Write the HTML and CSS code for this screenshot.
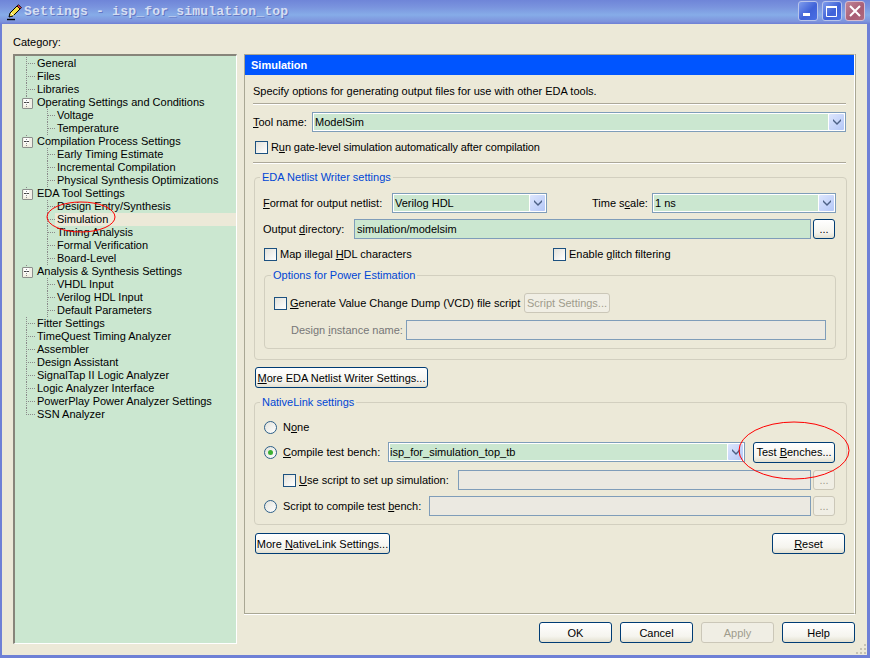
FILE: index.html
```html
<!DOCTYPE html>
<html>
<head>
<meta charset="utf-8">
<title>Settings</title>
<link rel="stylesheet" href="styles.css">
</head>
<body>
<div class="window">
  <header class="titlebar">
    <svg class="app-icon" width="16" height="17" viewBox="0 0 16 17">
      <path d="M1 15.5h8" stroke="#000" stroke-width="1.4"/>
      <path d="M3 13l1-4 7-7 3 3-7 7z" fill="#f4e04a" stroke="#000" stroke-width="1"/>
      <path d="M11 2l1.5-1.3 3 3L14 5z" fill="#e0384a" stroke="#000" stroke-width=".8"/>
      <path d="M5 9l2.6 2.6" stroke="#fff" stroke-width="1"/>
    </svg>
    <span class="title-text">Settings - isp_for_simulation_top</span>
    <div class="win-buttons">
      <span class="win-btn"><svg width="20" height="20" viewBox="0 0 20 20"><rect x="5" y="12" width="7" height="3" fill="#fff"/></svg></span>
      <span class="win-btn"><svg width="20" height="20" viewBox="0 0 20 20"><path d="M4.500 5.500h10v10h-10z" fill="none" stroke="#fff"/><path d="M4 5h11v2H4z" fill="#fff"/></svg></span>
      <span class="win-btn close"><svg width="20" height="20" viewBox="0 0 20 20"><path d="M5 5l10 10M15 5L5 15" stroke="#fff" stroke-width="2"/></svg></span>
    </div>
  </header>

  <div class="client">
    <div class="category-label">Category:</div>
    <div class="columns">
      <nav class="tree">
        <div class="node l1">General</div>
        <div class="node l1">Files</div>
        <div class="node l1">Libraries</div>
        <div class="node l1 open">Operating Settings and Conditions</div>
        <div class="node l2">Voltage</div>
        <div class="node l2">Temperature</div>
        <div class="node l1 open">Compilation Process Settings</div>
        <div class="node l2">Early Timing Estimate</div>
        <div class="node l2">Incremental Compilation</div>
        <div class="node l2">Physical Synthesis Optimizations</div>
        <div class="node l1 open">EDA Tool Settings</div>
        <div class="node l2">Design Entry/Synthesis</div>
        <div class="node l2 selected">Simulation</div>
        <div class="node l2">Timing Analysis</div>
        <div class="node l2">Formal Verification</div>
        <div class="node l2">Board-Level</div>
        <div class="node l1 open">Analysis &amp; Synthesis Settings</div>
        <div class="node l2">VHDL Input</div>
        <div class="node l2">Verilog HDL Input</div>
        <div class="node l2">Default Parameters</div>
        <div class="node l1">Fitter Settings</div>
        <div class="node l1">TimeQuest Timing Analyzer</div>
        <div class="node l1">Assembler</div>
        <div class="node l1">Design Assistant</div>
        <div class="node l1">SignalTap II Logic Analyzer</div>
        <div class="node l1">Logic Analyzer Interface</div>
        <div class="node l1">PowerPlay Power Analyzer Settings</div>
        <div class="node l1 last">SSN Analyzer</div>
      </nav>

      <div class="main-col">
        <section class="panel">
          <h2 class="panel-head">Simulation</h2>
          <div class="panel-body">
            <div class="text-row desc">Specify options for generating output files for use with other EDA tools.</div>
            <div class="sep sep-a"></div>
            <div class="row tool-row">
              <label class="lbl w-tool"><u>T</u>ool name:</label>
              <div class="combo grow"><span class="combo-text">ModelSim</span><span class="arrow"><svg width="10" height="8" viewBox="0 0 10 8"><path d="M1 1l4 4 4-4v2L5 7 1 3z" fill="#4d6185"/></svg></span></div>
            </div>
            <div class="row check-row run-row"><span class="check"></span><span class="tight">R<u>u</u>n gate-level simulation automatically after compilation</span></div>
            <div class="sep sep-b"></div>

            <fieldset class="group eda">
              <legend>EDA Netlist Writer settings</legend>
              <div class="row format-row">
                <label class="lbl w-format"><u>F</u>ormat for output netlist:</label>
                <div class="combo w-fmt"><span class="combo-text">Verilog HDL</span><span class="arrow"><svg width="10" height="8" viewBox="0 0 10 8"><path d="M1 1l4 4 4-4v2L5 7 1 3z" fill="#4d6185"/></svg></span></div>
                <label class="lbl w-time">Time s<u>c</u>ale:</label>
                <div class="combo w-scale"><span class="combo-text">1 ns</span><span class="arrow"><svg width="10" height="8" viewBox="0 0 10 8"><path d="M1 1l4 4 4-4v2L5 7 1 3z" fill="#4d6185"/></svg></span></div>
              </div>
              <div class="row dir-row">
                <label class="lbl w-dir">Output <u>d</u>irectory:</label>
                <div class="field w-dirfield">simulation/modelsim</div>
                <button class="btn dots">...</button>
              </div>
              <div class="row check-row map-row">
                <span class="check"></span><span class="w-map">Map illegal <u>H</u>DL characters</span>
                <span class="check"></span><span>Enable <u>g</u>litch filtering</span>
              </div>
              <fieldset class="group power">
                <legend>Options for Power Estimation</legend>
                <div class="row gen-row">
                  <span class="check"></span><span class="w-gen"><u>G</u>enerate Value Change Dump (VCD) file script</span>
                  <button class="btn off script-btn">Script Settings...</button>
                </div>
                <div class="row inst-row">
                  <label class="lbl off-text w-inst">Design <u>i</u>nstance name:</label>
                  <div class="field off-field w-instfield"></div>
                </div>
              </fieldset>
            </fieldset>

            <button class="btn more-eda"><u>M</u>ore EDA Netlist Writer Settings...</button>

            <fieldset class="group native">
              <legend>NativeLink settings</legend>
              <div class="row none-row"><span class="radio"></span><span>N<u>o</u>ne</span></div>
              <div class="row compile-row">
                <span class="radio on"></span><label class="lbl w-compile"><u>C</u>ompile test bench:</label>
                <div class="combo w-bench"><span class="combo-text">isp_for_simulation_top_tb</span><span class="arrow"><svg width="10" height="8" viewBox="0 0 10 8"><path d="M1 1l4 4 4-4v2L5 7 1 3z" fill="#4d6185"/></svg></span></div>
                <button class="btn bench-btn">Test <u>B</u>enches...</button>
              </div>
              <div class="row use-row">
                <span class="check"></span><label class="lbl w-use"><u>U</u>se script to set up simulation:</label>
                <div class="field off-field w-usefield"></div>
                <button class="btn off dots">...</button>
              </div>
              <div class="row script-row">
                <span class="radio"></span><label class="lbl w-script">Script to compile test <u>b</u>ench:</label>
                <div class="field off-field w-scriptfield"></div>
                <button class="btn off dots">...</button>
              </div>
            </fieldset>

            <div class="row more-row">
              <button class="btn more-native">More <u>N</u>ativeLink Settings...</button>
              <button class="btn reset"><u>R</u>eset</button>
            </div>
          </div>
        </section>
        <footer class="footer">
          <button class="btn foot">OK</button>
          <button class="btn foot">Cancel</button>
          <button class="btn foot off">Apply</button>
          <button class="btn foot">Help</button>
        </footer>
      </div>
    </div>
  </div>
  <svg class="grip" width="12" height="12" viewBox="0 0 12 12">
    <path d="M9 1h2v2H9zM5 5h2v2H5zM9 5h2v2H9zM1 9h2v2H1zM5 9h2v2H5zM9 9h2v2H9z" fill="#c5c2b2"/>
  </svg>
  <svg class="marks" width="870" height="658" viewBox="0 0 870 658">
    <ellipse cx="81" cy="217" rx="34" ry="15" fill="none" stroke="#f00"/>
    <ellipse cx="794" cy="450.500" rx="55" ry="28.500" fill="none" stroke="#f00"/>
  </svg>
</div>
</body>
</html>
```
FILE: styles.css
```css
* { box-sizing: border-box; }
html, body { margin: 0; padding: 0; }
body { width: 870px; height: 658px; overflow: hidden; font: 11px/14px "Liberation Sans", sans-serif; color: #000; }
u { text-decoration: underline; }

.window { position: relative; width: 870px; height: 658px; background: #ece9d8; display: flex; flex-direction: column; border: solid #6e80d6; border-width: 0 3px 3px 2px; }

.titlebar { flex: none; margin: 0 -3px 0 -2px; height: 24px; display: flex; align-items: center; padding: 0 5px 0 6px; background: linear-gradient(180deg, #6f85d8 0%, #7a94de 30%, #86ace8 62%, #7d93dc 90%, #6e7fd4 100%); }
.app-icon { margin-right: 2px; margin-top: 1px; }
.title-text { font: bold 13px/16px "Liberation Mono", monospace; letter-spacing: .21px; color: #d5def2; text-shadow: 1px 1px 0 #6377c4; }
.win-buttons { margin-left: auto; display: flex; gap: 3.500px; margin-top: -2px; }
.win-btn { width: 20px; height: 20px; display: block; border-radius: 3px; border: 1px solid #b8c4ec; background: linear-gradient(135deg, #7f9cec 0%, #3f62d8 55%, #4a70e4 100%); }
.win-btn svg { display: block; margin: -1px; }
.win-btn.close { background: linear-gradient(135deg, #c08496 0%, #a85d74 60%, #b06a80 100%); border-color: #d6bcd0; }

.client { flex: 1; display: flex; flex-direction: column; padding: 11px 12px 0 11px; min-height: 0; }
.category-label { height: 14px; }
.columns { display: flex; margin-top: 5px; flex: 1; gap: 7px; min-height: 0; }

.tree { width: 224px; height: 590px; padding: 1px 0 0; background: #cbe7d0; border: solid; border-width: 2px 1px 1px 2px; border-color: #87857a #fff #fff #87857a; flex: none; }
.node { position: relative; height: 13px; line-height: 13px; white-space: nowrap; }
.node.l1 { padding-left: 22px; }
.node.l2 { padding-left: 42px; }
.node::before { content: ""; position: absolute; top: 6px; border-top: 1px dotted #8a8a8a; }
.node::after { content: ""; position: absolute; top: 0; bottom: 0; border-left: 1px dotted #8a8a8a; }
.node.l1::before { left: 11px; width: 9px; }
.node.l1::after { left: 11px; }
.node.l1.last::after { bottom: 6px; }
.node.l2::before { left: 32px; width: 8px; }
.node.l2::after { left: 32px; }
.node.open { z-index: 1; }
.node.open::before { left: 7px; height: 9px; top: 2px; border: 1px solid #8c8f8c; border-radius: 1px; background: linear-gradient(#fff 0, #fff 3px, #444 3px, #444 4px, #fff 4px, #ece9d8 100%) 1px 0 / 5px 100% no-repeat, #f1efe6; width: 9px; }
.node.selected { background: linear-gradient(90deg, transparent 40px, #ece9d8 40px); }

.main-col { flex: 1; display: flex; flex-direction: column; min-width: 0; }
.panel { width: 611px; height: 560px; border: 1px solid; border-color: #a9a794 #fff #a9a794 #a9a794; box-shadow: 1px 0 0 #a9a794, 0 1px 0 #fff; flex: none; }
.panel-head { margin: 0; height: 20px; padding-left: 6px; background: #0055ff; color: #fff; font: bold 11px/20px "Liberation Sans", sans-serif; }
.panel-body { padding: 0 8px; }

.row { display: flex; align-items: center; white-space: nowrap; }
.tight { letter-spacing: -.1px; }
.text-row { height: 14px; }
.desc { margin-top: 9px; }
.sep { height: 2px; background: linear-gradient(#aca899 1px, #fff 1px); }
.sep-a { margin-top: 5px; }
.sep-b { margin-top: 8px; }
.lbl { display: block; flex: none; }

.combo { position: relative; height: 20px; display: flex; border: 1px solid #7f9db9; background: #fff; padding: 1px; flex: none; }
.combo.grow { flex: 1; }
.combo-text { flex: 1; background: #cbe7d0; padding-left: 1px; line-height: 16px; }
.w-bench .combo-text { padding-left: 0; }
.arrow { flex: none; width: 15px; margin-left: 1px; display: flex; align-items: center; justify-content: center; background: linear-gradient(135deg, #dde6fd, #b4c7f7); border-radius: 1px; }
.arrow svg { display: block; }
.field { height: 20px; border: 1px solid #7f9db9; background: #cbe7d0; padding-left: 2px; line-height: 18px; flex: none; }
.off-field { background: #ebe9e1; }
.off-text { color: #777; }

.btn { display: inline-block; font: 11px/14px "Liberation Sans", sans-serif; color: #000; padding: 0; height: 21px; border: 1px solid #003c74; border-radius: 3px; background: linear-gradient(#fff, #f5f4ee 70%, #e3e0d0); white-space: nowrap; text-align: center; flex: none; }
.btn.off { color: #9f9c8c; border-color: #cbc7b8; background: #f0eee4; }
.dots { width: 22px; height: 20px; margin-left: 2px; }

.check { flex: none; display: block; width: 13px; height: 13px; border: 1px solid #1c5180; background: linear-gradient(135deg, #e3e2da, #fff); margin-right: 3px; }
.radio { flex: none; display: block; position: relative; width: 13px; height: 13px; border: 1px solid #2c5f88; border-radius: 50%; background: linear-gradient(135deg, #e3e2da, #fff); margin-right: 6px; }
.radio.on::after { content: ""; position: absolute; left: 3px; top: 3px; width: 5px; height: 5px; border-radius: 50%; background: #3cb034; }

.group { margin: 0; min-width: 0; border: 1px solid #d2cfbf; border-radius: 4px; }
.group > legend { margin-left: -3px; padding: 0 2px; color: #0046d5; line-height: 14px; }

.tool-row { margin-top: 7px; }
.w-tool { width: 59px; }
.run-row { margin: 8px 0 0 2px; height: 14px; }
.eda { width: 593px; height: 190px; margin: 6px 0 0 1px; padding: 9px 10px 0 8px; }
.format-row { height: 20px; }
.w-format { width: 129px; }
.w-fmt { width: 155px; }
.w-time { width: 60px; margin-left: 45px; }
.w-scale { width: 184px; }
.dir-row { margin-top: 6px; }
.w-dir { width: 91px; }
.w-dirfield { width: 457px; }
.map-row { margin: 8px 0 0 1px; height: 14px; }
.w-map { width: 273px; }
.power { width: 572px; height: 81px; margin: 7px 0 0 1px; padding: 11px 9px 0 9px; }
.gen-row { height: 20px; }
.w-gen { width: 234px; }
.script-btn { width: 86px; height: 20px; }
.inst-row { margin-top: 7px; }
.w-inst { width: 115px; margin-left: 17px; }
.w-instfield { width: 420px; }
.more-eda { display: block; width: 173px; margin: 7px 0 0 2px; }
.native { width: 593px; height: 130px; margin: 7px 0 0 1px; padding: 11px 10px 0 9px; }
.native > legend { margin-left: -4px; }
.none-row { height: 14px; }
.compile-row { margin-top: 8px; height: 20px; }
.w-compile { width: 105px; }
.w-bench { width: 357px; }
.bench-btn { width: 82px; margin-left: 8px; }
.use-row { margin: 8px 0 0 19px; }
.w-use { width: 159px; }
.w-usefield { width: 353px; }
.script-row { margin-top: 6px; }
.w-script { width: 146px; }
.w-scriptfield { width: 382px; }
.more-row { margin: 8px 0 0 2px; justify-content: space-between; width: 590px; }
.more-native { width: 135px; }
.reset { width: 73px; }

.footer { flex: 1; display: flex; justify-content: flex-end; gap: 8px; padding-top: 8px; }
.foot { width: 73px; }

.grip { position: absolute; right: 0; bottom: 0; }
.marks { position: absolute; left: -2px; top: 0; pointer-events: none; }
```
